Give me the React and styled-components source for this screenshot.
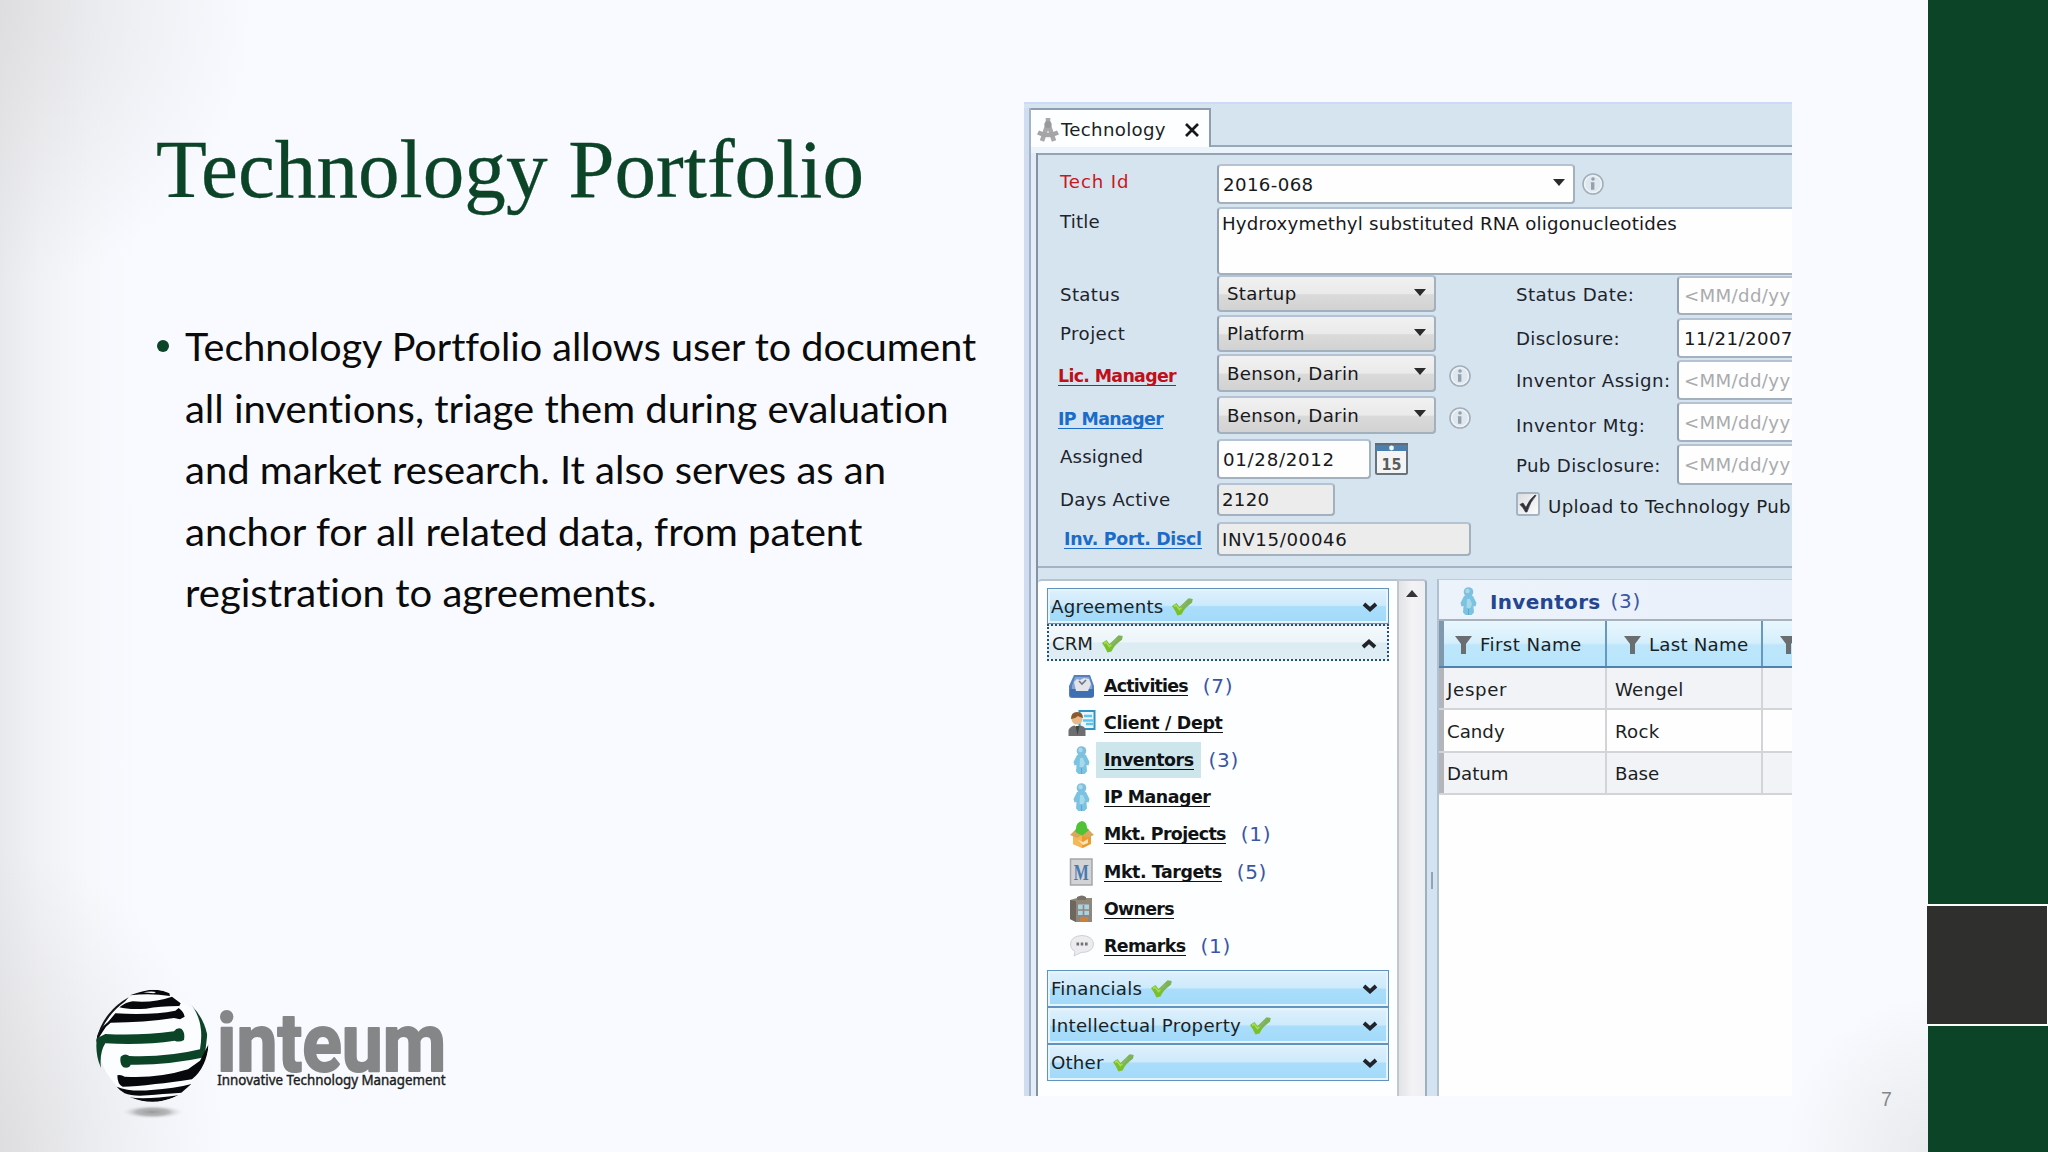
import React, { useLayoutEffect, useRef, useState } from 'react';
import styled, { createGlobalStyle, css } from 'styled-components';

const Global = createGlobalStyle`
  * { box-sizing: border-box; }
  html, body { margin: 0; padding: 0; overflow: hidden; }
  body { font-family: 'DejaVu Sans', Verdana, sans-serif; }
`;

/* ---------- text that is tracked or condensed to a set measure ---------- */
const FitSpan = styled.span`
  display: inline-block;
  white-space: nowrap;
  transform-origin: 0 50%;
`;

function Fit({ w, condense, children }) {
  const ref = useRef(null);
  const [style, setStyle] = useState({});
  useLayoutEffect(() => {
    const natural = ref.current.offsetWidth;
    const count = String(children).length;
    setStyle(
      condense
        ? { transform: `scaleX(${w / natural})` }
        : { letterSpacing: `${(w - natural) / count}px` }
    );
  }, []);
  return <FitSpan ref={ref} style={style}>{children}</FitSpan>;
}

/* ---------- slide ---------- */
const Slide = styled.div`
  width: 2048px;
  height: 1152px;
  display: flex;
  overflow: hidden;
  background:
    radial-gradient(ellipse 220px 240px at 1928px 1152px, rgba(228, 229, 230, 0.75), rgba(248, 250, 255, 0) 65%),
    radial-gradient(ellipse 340px 380px at 0 0, rgba(214, 214, 215, 0.6), rgba(248, 250, 255, 0) 75%),
    radial-gradient(ellipse 300px 400px at 0 1152px, rgba(214, 214, 215, 0.6), rgba(248, 250, 255, 0) 75%),
    linear-gradient(90deg, #e8e9ec 0, #f1f2f5 40px, #f6f8fc 90px, #f8faff 140px);
`;
const TextColumn = styled.section`
  width: 1024px;
  display: flex;
  flex-direction: column;
`;
const Heading = styled.h1`
  margin: 120px 0 0 156px;
  height: 110px;
  font: 400 82px/100px 'Liberation Serif', serif;
  color: #0c4428;
  -webkit-text-stroke: 0.3px #0c4428;
`;
const Bullet = styled.div`
  display: flex;
  margin: 86px 0 0 157px;
  color: #0b0b0b;
  font: 400 38px/61.6px Lato, sans-serif;
  font-variant-ligatures: none;
`;
const Dot = styled.i`
  width: 12px;
  height: 12px;
  margin: 24px 16px 0 0;
  border-radius: 50%;
  background: #0c4428;
`;
const Line = styled.div`
  height: 61.6px;
`;
const LogoWrap = styled.div`
  margin: auto 0 22px 80px;
  height: 160px;
`;
const ShotColumn = styled.section`
  width: 768px;
  padding-top: 102px;
`;
const NumberColumn = styled.div`
  width: 136px;
  padding: 1088px 0 0 89px;
  font: 400 19.5px/22px 'Liberation Sans', sans-serif;
  color: #85868b;
`;
const Rail = styled.aside`
  width: 120px;
  display: flex;
  flex-direction: column;
  background: #fbfffb;
`;
const Green = styled.div`
  background: #0c4428;
  height: ${(p) => p.$h}px;
`;
const Dark = styled.div`
  height: 118px;
  margin: 2px 1px 2px -1px;
  background: #2f302d;
`;

/* ---------- application window ---------- */
const Win = styled.div`
  width: 768px;
  height: 994px;
  display: flex;
  overflow: hidden;
  background: #d6e4f0;
  border-top: 2px solid #cbdaf6;
  font-size: 18.2px;
  color: #1b1f24;
`;
const OuterEdge = styled.div`
  width: 7px;
  background: #d0ddf0;
  border-right: 2px solid #a5b3c8;
  margin-top: ${(p) => p.$t || 0}px;
`;
const WinMain = styled.div`
  flex: 1;
  min-width: 0;
  display: flex;
  flex-direction: column;
`;
const TabStrip = styled.div`
  height: 43px;
  display: flex;
  align-items: flex-end;
`;
const Tab = styled.div`
  width: 180px;
  height: 39px;
  display: flex;
  align-items: center;
  padding: 3px 0 0 6px;
  background: #fcfeff;
  border: solid #8f9db0;
  border-width: 2px 2px 0 0;
`;
const TabText = styled.span`
  margin: 0 17px 0 2px;
  width: 106px;
  line-height: 24px;
`;
const TabRest = styled.div`
  flex: 1;
  height: 43px;
  border-bottom: 2px solid #98a8ba;
`;
const TabGap = styled.div`
  height: 6px;
  background: #ebf4fa;
`;
const Body = styled.div`
  flex: 1;
  display: flex;
  min-height: 0;
`;
const PaleEdge = styled.div`
  width: 7px;
  background: #e3edf7;
  border-right: 2px solid #8592a3;
`;
const Content = styled.div`
  flex: 1;
  min-width: 0;
  display: flex;
  flex-direction: column;
  border-top: 2px solid #95a3b3;
`;

/* ---------- form ---------- */
const FormPart = styled.div`
  display: flex;
  height: ${(p) => p.$h}px;
`;
const Col = styled.div`
  width: ${(p) => p.$w}px;
  flex: none;
  display: flex;
  flex-direction: column;
  padding-left: ${(p) => p.$pad || 0}px;
`;
const labelTones = {
  plain: css`color: #1d242c;`,
  required: css`color: #c8171e;`,
  requiredLink: css`color: #c00f18; font-weight: 700; font-size: 17.4px;`,
  link: css`color: #1a6cc8; font-weight: 700; font-size: 17.4px;`,
};
const Label = styled.div`
  height: 24px;
  line-height: 24px;
  margin: ${(p) => p.$gap}px 0 0 ${(p) => p.$shift || 0}px;
  ${(p) => labelTones[p.$tone || 'plain']}
`;
const Under = styled.span`
  display: inline-block;
  height: 22px;
  line-height: 24px;
  border-bottom: 1.5px solid currentColor;
`;
const FieldRow = styled.div`
  display: flex;
  align-items: center;
  margin-top: ${(p) => p.$gap}px;
  height: ${(p) => p.$h}px;
`;
const Box = styled.div`
  width: ${(p) => p.$w}px;
  height: 100%;
  display: flex;
  align-items: ${(p) => (p.$top ? 'flex-start' : 'center')};
  justify-content: space-between;
  flex: none;
  padding: ${(p) => (p.$top ? '3px' : '1px')} 8px 0 ${(p) => p.$pad || 4}px;
  border: 2px solid #a3b0bd;
  border-top-color: #b4c3d4;
  border-left-color: #93a0b0;
  border-radius: 4px;
  line-height: 24px;
  color: ${(p) => (p.$hint ? '#a9abae' : '#17191c')};
  background: ${(p) =>
    p.$kind === 'select'
      ? 'linear-gradient(#f1f1f1 0, #eaeaea 50%, #dadada 54%, #d2d2d2 100%)'
      : p.$kind === 'locked'
      ? '#ececec'
      : '#fefefe'};
`;
const Arrow = styled.i`
  width: 0;
  height: 0;
  margin-top: -4px;
  border: 6px solid transparent;
  border-top: 7px solid #2b2b2b;
  border-bottom: 0;
`;
const UpArrow = styled.i`
  width: 0;
  height: 0;
  border: 6px solid transparent;
  border-bottom: 7px solid #33353b;
  border-top: 0;
`;
const InfoSlot = styled.span`
  margin-left: ${(p) => p.$l}px;
  height: 24px;
  margin-top: ${(p) => p.$t || 0}px;
`;
const CheckRow = styled.div`
  display: flex;
  align-items: center;
  margin-top: 16px;
  height: 24px;
  gap: 8px;
  white-space: nowrap;
  width: 290px;
`;
const CheckBox = styled.span`
  width: 24px;
  height: 24px;
  margin-top: -4px;
  border: 2px solid #a6b3c1;
  border-radius: 3px;
  background: linear-gradient(135deg, #dcdfe2, #fcfcfc);
`;
const FormEnd = styled.div`
  height: 13px;
  margin-top: -1px;
  border-top: 2px solid #a4b2c2;
`;

/* ---------- lower panes ---------- */
const Panes = styled.div`
  flex: 1;
  display: flex;
  min-height: 0;
`;
const Nav = styled.div`
  width: 359px;
  padding: 7px 0 0 9px;
  background: #fdfeff;
  border-top: 2px solid #b5c2cf;
  border-top-left-radius: 4px;
`;
const Scroll = styled.div`
  width: 30px;
  display: flex;
  justify-content: center;
  align-items: flex-start;
  padding-top: 9px;
  background: linear-gradient(90deg, #e2e3e6, #f3f3f6 50%, #eeeff2);
  border: solid #c2c7cd;
  border-width: 2px 2px 0 2px;
  border-right-color: #9fb0bd;
  border-top-right-radius: 4px;
`;
const Splitter = styled.div`
  width: 10px;
  display: flex;
  align-items: flex-start;
  justify-content: center;
  padding-top: 293px;
  background: #d3e3f2;
`;
const Grip = styled.i`
  width: 2px;
  height: 17px;
  background: #94a3b4;
`;
const Header = styled.div`
  width: 342px;
  height: ${(p) => p.$h || 37}px;
  display: flex;
  align-items: center;
  padding: 2px 10px 0 3px;
  border: 1.5px solid #5f93c0;
  box-shadow: inset 0 0 0 2px #e6f4fd;
  background: linear-gradient(#dff0fc 0, #cdeafb 48%, #a9ddfb 52%, #a3daf9 100%);
  ${(p) =>
    p.$open &&
    css`
      border: 2px dotted #24507c;
      box-shadow: none;
      background: linear-gradient(#f3f9fc 0, #edf5fa 48%, #dcecf3 52%, #dfeef4 100%);
    `}
`;
const HeaderText = styled.span`
  line-height: 24px;
  margin-right: 8px;
`;
const Push = styled.span`
  margin-left: auto;
  height: 12px;
  line-height: 0;
`;
const Tree = styled.div`
  padding: 6px 0 5px 21px;
`;
const TreeRow = styled.div`
  height: 37.2px;
  display: flex;
  align-items: center;
`;
const TreeIcon = styled.span`
  width: 28px;
  height: 28px;
  line-height: 0;
`;
const TreeName = styled.span`
  height: 36px;
  padding: 6px 7px 0 8px;
  font-weight: 700;
  font-size: 17.4px;
  color: #101214;
  background: ${(p) => (p.$on ? '#cde6ec' : 'transparent')};
`;
const Count = styled.span`
  margin-left: ${(p) => p.$l ?? 8}px;
  color: #3a56a2;
  font-size: 20px;
  line-height: 24px;
`;

const Grid = styled.div`
  flex: 1;
  min-width: 0;
  background: #fefeff;
  border-left: 2px solid #b2bfce;
  border-top: 1px solid #bccbe6;
  overflow: hidden;
`;
const GridTitle = styled.div`
  height: 41px;
  display: flex;
  align-items: center;
  padding: 3px 0 0 16px;
  background: linear-gradient(90deg, #edf3fb, #e9f0fa);
  border-bottom: 2px solid #a8b2bd;
  color: #23468f;
  font-size: 20px;
  font-weight: 700;
`;
const GridName = styled.span`
  margin: 1px 0 0 7px;
  line-height: 24px;
`;
const Row = styled.div`
  display: flex;
  height: ${(p) => p.$h}px;
  background: ${(p) => (p.$head ? 'linear-gradient(#e9f7fe 0, #d5effc 48%, #bde6fb 54%, #b9e5fb 100%)' : p.$alt ? '#f2f3f7' : '#fefefe')};
  border-bottom: 2px solid ${(p) => (p.$head ? '#4f83ad' : '#d3d4d8')};
`;
const Handle = styled.div`
  width: 5px;
  background: ${(p) => (p.$head ? '#7f98ac' : '#b4b4bb')};
  flex: none;
`;
const Cell = styled.div`
  width: ${(p) => p.$w}px;
  flex: none;
  display: flex;
  align-items: center;
  padding: 3px 0 0 ${(p) => p.$pad}px;
  gap: 8px;
  line-height: 24px;
  border-right: 2px solid ${(p) => (p.$head ? '#6699c2' : '#d3d4d8')};
`;
const LightCount = styled.span`
  font-weight: 400;
`;

/* ---------- drawings ---------- */
const Info = () => (
  <svg width="24" height="24" viewBox="0 0 24 24">
    <circle cx="12" cy="12" r="10" fill="#dfe8ef" stroke="#a2afba" strokeWidth="1.6" />
    <circle cx="12" cy="12" r="8.4" fill="none" stroke="#eef4f8" strokeWidth="1.4" />
    <circle cx="12" cy="7" r="1.8" fill="#93a1ad" />
    <path d="M9.6 10.2h3.8v7.6h-3.4v-6z" fill="#93a1ad" />
  </svg>
);
const Compass = () => (
  <svg width="22" height="26" viewBox="0 0 22 26">
    <path d="M11 1v5M11 6L5 24M11 6l6 18" stroke="#a8a8a8" strokeWidth="4.6" fill="none" />
    <path d="M1 15.5q10 5 20 0" stroke="#a4a4a4" strokeWidth="4.4" fill="none" />
    <circle cx="11" cy="7.5" r="3.6" fill="#999" />
  </svg>
);
const Close = () => (
  <svg width="16" height="14" viewBox="0 0 16 14">
    <path d="M2 1l12 12M14 1L2 13" stroke="#16181b" strokeWidth="2.7" />
  </svg>
);
const CalBox = styled.span`
  margin-left: 4px;
  width: 33px;
  height: 32px;
  line-height: 0;
`;
const Calendar = () => (
  <CalBox>
    <svg width="33" height="32" viewBox="0 0 33 32">
      <rect x="1" y="1" width="31" height="30" rx="1.5" fill="#f4f4f4" stroke="#66727d" strokeWidth="2" />
      <rect x="1" y="1" width="31" height="7" fill="#4a7fb0" />
      <path d="M0 1h33" stroke="#5f6b78" strokeWidth="2" />
      <circle cx="16.5" cy="5" r="2.4" fill="#f5fafc" />
      <text x="16.5" y="26.500" textAnchor="middle" fontFamily="DejaVu Sans, sans-serif" fontWeight="700" fontSize="16" textLength="20" lengthAdjust="spacingAndGlyphs" fill="#5c5c5c">15</text>
    </svg>
  </CalBox>
);
const Tick = () => (
  <svg width="20" height="20" viewBox="0 0 20 20">
    <path d="M2 10.500l3-1.500 3 4.500Q11 6 17 1l1 .5Q12 8 9 18H7.500Q5 13 2 10.500z" fill="#2f3238" stroke="#2f3238" strokeWidth=".7" />
  </svg>
);
const GreenCheck = () => (
  <svg width="22" height="18" viewBox="0 0 22 18">
    <path d="M1 8l4.500-3 3 4L17.500.5l4 .5-.5 3.500Q14 9 10.500 16.500L6.500 17.500Q4 12 1 8z" fill="#79c02c" />
    <path d="M3 8.500l2-1.500 3.500 4.500L16 4" fill="none" stroke="#a6db5a" strokeWidth="1.600" />
    <path d="M9 9.500L17.500.5l4 .5-.5 3.500-7 6z" fill="#7fae66" opacity=".8" />
  </svg>
);
const Chevron = ({ up }) => (
  <svg width="16" height="12" viewBox="0 0 16 12">
    <path d={up ? 'M2 9l6-5.500L14 9' : 'M2 3l6 5.500L14 3'} fill="none" stroke="#20242a" strokeWidth="3.800" />
  </svg>
);
const Funnel = () => (
  <svg width="17" height="18" viewBox="0 0 17 18">
    <path d="M0 0h17L11 8v10H6V8z" fill="#6b6e71" />
  </svg>
);
const Person = () => (
  <svg width="28" height="28" viewBox="0 0 28 28">
    <path d="M9 9q5-2 9 0l3.500 7-1 3.500-2-.5.5 6.500-2.500 2.500h-6L8 25.500 8.500 19l-2 .5-1-3.500z" fill="#7cc3e2" />
    <path d="M12 12h3l2 5-1.500 4h-4z" fill="#a6d9ec" />
    <circle cx="13.500" cy="5" r="4.800" fill="#7fc0df" />
    <circle cx="12.500" cy="4" r="2.200" fill="#abd9eb" />
    <path d="M13.500 22v6" stroke="#5ba8cc" strokeWidth="1" />
  </svg>
);
const icons = {
  activities: (
    <svg width="28" height="28" viewBox="0 0 28 28">
      <path d="M6 3h16l4 11v9q0 3-3 3H4q-3 0-3-3v-9z" fill="#557fbd" />
      <path d="M7 5h14l3 9v3H4v-3z" fill="#86a5d3" />
      <path d="M2 17h24v6q0 2-2 2H4q-2 0-2-2z" fill="#3f6fb3" />
      <path d="M6 10l3-3 3 1 4-2 5 1 2 5-3 7H8z" fill="#e2e4ea" />
      <path d="M11 9l3 3 4-4" stroke="#6c7487" strokeWidth="1.600" fill="none" />
    </svg>
  ),
  client: (
    <svg width="28" height="28" viewBox="0 0 28 28">
      <rect x="11.500" y="2" width="15" height="18" fill="#e9f6fd" stroke="#2e94c4" strokeWidth="2" />
      <path d="M16 7h8M15 11.500h10M18 15h7" stroke="#5cc6ee" strokeWidth="2.400" />
      <circle cx="9" cy="10" r="5.500" fill="#e9b98a" />
      <path d="M3 10q0-7 6-7 6 0 6 6-4-1-5-2-3 3-7 3z" fill="#8c5a2b" />
      <path d="M.5 27v-6q2-4 6-4.500l3 3 3-3q5 1 5 4.500v6z" fill="#6e6e70" />
      <path d="M7.500 17l2 9 2-9z" fill="#3a4a43" />
    </svg>
  ),
  person: <Person />,
  projects: (
    <svg width="28" height="28" viewBox="0 0 28 28">
      <path d="M5 13h18v11l-8 4-10-4z" fill="#ee9b2e" />
      <path d="M5 13l9 3v12L5 24z" fill="#f6b758" />
      <path d="M2 15l6-6 6 6-5 3zM26 15l-6-6-6 6 5 3z" fill="#d9a75e" />
      <path d="M8 9q0-7 6-8 5 1 5 7l2 2-6 5q-5 0-8-4z" fill="#4fc235" />
      <path d="M10 20l5 2 5-3v4l-5 2z" fill="#fbe3bd" />
    </svg>
  ),
  targets: (
    <svg width="28" height="28" viewBox="0 0 28 28">
      <rect x="2.500" y="1" width="21.500" height="26" fill="#d1d3d5" stroke="#a2a6aa" strokeWidth="1.500" />
      <text x="13.300" y="21.500" textAnchor="middle" fontFamily="Liberation Serif, serif" fontWeight="700" fontSize="24" textLength="15" lengthAdjust="spacingAndGlyphs" fill="#4a78b0">M</text>
    </svg>
  ),
  owners: (
    <svg width="28" height="28" viewBox="0 0 28 28">
      <path d="M2 5l7-2h15v24H8l-6-3z" fill="#8f877b" />
      <path d="M2 5l6 1v21l-6-3z" fill="#6d675e" />
      <path d="M9 2q5-3 9 0v3H9z" fill="#777169" />
      <rect x="10" y="9.500" width="11" height="10.500" fill="#a9d3e4" />
      <path d="M15.500 10v10M9.500 15h12" stroke="#8f877b" strokeWidth="1.600" />
      <path d="M12 22h8v4.500h-8z" fill="#c9813f" />
    </svg>
  ),
  remarks: (
    <svg width="28" height="28" viewBox="0 0 28 28">
      <path d="M14 3.500q11 .5 11.500 8.500Q25 20.500 13 20.500L6 24l1-4.500Q2.500 17 2.500 12 3 4 14 3.500z" fill="#ececef" stroke="#cfd0d3" />
      <path d="M8.500 12h2.600M12.700 12h2.600M17 12h2.600" stroke="#6e7177" strokeWidth="2.800" />
    </svg>
  ),
};

const Logo = () => (
  <svg width="380" height="160" viewBox="0 0 1140 480">
    <defs>
      <clipPath id="globe"><circle cx="217" cy="227" r="168" /></clipPath>
      <radialGradient id="shade"><stop offset="0" stopColor="#9a9b9d" /><stop offset=".5" stopColor="#b8b9bb" /><stop offset="1" stopColor="#f6f8fc" stopOpacity="0" /></radialGradient>
    </defs>
    <ellipse cx="217" cy="426" rx="98" ry="22" fill="url(#shade)" />
    <circle cx="217" cy="227" r="160" fill="#fcfdff" />
    <g clipPath="url(#globe)">
      <path d="M150 76q60-24 98-14l20 8 2 8q-60-10-120-2z" fill="#07080b" />
      <path d="M190 67q24-5 38-1l-6 4q-20-2-32-3z" fill="#fcfdff" />
      <path d="M118 112q20-16 40-18 60 6 118-14l26 20-4 8q-60 0-100 8-50 4-80-4z" fill="#07080b" />
      <path d="M84 156l22-26q110 6 180-8l10-8q16 12 18 26l-14 8-18-4q-90 14-190 14l-14 12q-20 30-32 50 4-38 38-64z" fill="#07080b" />
      <path d="M46 222q10-54 40-90 24-30 60-50l-10 12q-50 36-74 90z" fill="#15161a" />
      <path d="M48 206l28-14q100 6 206-8 8-12 22-8 12 10 8 34-14 8-28 2-90 14-208 8-20 30-12 86-22-32-16-100z" fill="#0c4428" />
      <path d="M324 92q50 40 58 100l-8 70q-110 24-222 22-4 12-22 8-12-10-8-32 14-12 26-2 116 4 212-20 16-90-36-146z" fill="#0c4428" />
      <path d="M112 316q10-4 22 4 100 6 190-22l36-26 26-50q-6 70-50 106-60 10-110 14-60 8-98 8-16-6-16-34z" fill="#07080b" />
      <path d="M110 350q40 16 104 10 70-4 120-18l-30 26q-60 4-100 8-46 4-70-6-16-10-24-20z" fill="#07080b" />
      <path d="M146 382q50 8 150-6-40 20-82 22-40-4-68-16z" fill="#07080b" />
    </g>
    <text x="411" y="302" fontFamily="Roboto, sans-serif" fontWeight="700" fontSize="246" textLength="688" lengthAdjust="spacingAndGlyphs" fill="#858688" stroke="#858688" strokeWidth="6" strokeLinejoin="round">inteum</text>
    <text x="412" y="345" fontFamily="Noto Sans, sans-serif" fontWeight="400" fontSize="41" textLength="685" lengthAdjust="spacingAndGlyphs" fill="#1c1d20" stroke="#1c1d20" strokeWidth="1.2">Innovative Technology Management</text>
  </svg>
);

/* ---------- data ---------- */
const bodyLines = [
  ['Technology Portfolio allows user to document', 791],
  ['all inventions, triage them during evaluation', 764],
  ['and market research. It also serves as an', 701],
  ['anchor for all related data, from patent', 677],
  ['registration to agreements.', 471],
];
const leftLabels = [
  { t: 'Status', w: 60, gap: 8 },
  { t: 'Project', w: 65, gap: 15 },
  { t: 'Lic. Manager', w: 118, gap: 18, tone: 'requiredLink', shift: -2 },
  { t: 'IP Manager', w: 105, gap: 19, tone: 'link', shift: -2 },
  { t: 'Assigned', w: 83, gap: 14 },
  { t: 'Days Active', w: 110, gap: 19 },
  { t: 'Inv. Port. Discl', w: 138, gap: 15, tone: 'link', shift: 4 },
];
const rightLabels = [
  { t: 'Status Date:', w: 118, gap: 8 },
  { t: 'Disclosure:', w: 104, gap: 20 },
  { t: 'Inventor Assign:', w: 155, gap: 18 },
  { t: 'Inventor Mtg:', w: 129, gap: 21 },
  { t: 'Pub Disclosure:', w: 145, gap: 16 },
];
const dates = [
  { t: '<MM/dd/yy', gap: 1, h: 39, hint: true },
  { t: '11/21/2007', gap: 3, h: 40 },
  { t: '<MM/dd/yy', gap: 2, h: 40, hint: true },
  { t: '<MM/dd/yy', gap: 2, h: 40, hint: true },
  { t: '<MM/dd/yy', gap: 2, h: 41, hint: true },
];
const tree = [
  { icon: 'activities', t: 'Activities', w: 84, n: 7 },
  { icon: 'client', t: 'Client / Dept', w: 119 },
  { icon: 'person', t: 'Inventors', w: 90, n: 3, on: true },
  { icon: 'person', t: 'IP Manager', w: 106 },
  { icon: 'projects', t: 'Mkt. Projects', w: 122, n: 1 },
  { icon: 'targets', t: 'Mkt. Targets', w: 118, n: 5 },
  { icon: 'owners', t: 'Owners', w: 70 },
  { icon: 'remarks', t: 'Remarks', w: 82, n: 1 },
];
const people = [
  ['Jesper', 60, 'Wengel', 68],
  ['Candy', 58, 'Rock', 44],
  ['Datum', 62, 'Base', 44],
];

function Labels({ items }) {
  return items.map((l) => (
    <Label key={l.t} $gap={l.gap} $tone={l.tone} $shift={l.shift}>
      {l.tone ? <Under><Fit w={l.w}>{l.t}</Fit></Under> : <Fit w={l.w}>{l.t}</Fit>}
    </Label>
  ));
}

function Select({ text, w, gap, h, info }) {
  return (
    <FieldRow $gap={gap} $h={h}>
      <Box $w={219} $pad={8} $kind="select"><Fit w={w}>{text}</Fit><Arrow /></Box>
      {info && <InfoSlot $l={12} $t={5}><Info /></InfoSlot>}
    </FieldRow>
  );
}

function Section({ text, w, open, h }) {
  return (
    <Header $open={open} $h={h}>
      <HeaderText><Fit w={w}>{text}</Fit></HeaderText>
      <GreenCheck />
      <Push><Chevron up={open} /></Push>
    </Header>
  );
}

function TechForm() {
  return (
    <>
      <FormPart $h={120}>
        <Col $w={179} $pad={22}>
          <Label $gap={15} $tone="required"><Fit w={69}>Tech Id</Fit></Label>
          <Label $gap={16}><Fit w={40}>Title</Fit></Label>
        </Col>
        <Col $w={590}>
          <FieldRow $gap={9} $h={40}>
            <Box $w={358}><Fit w={91}>2016-068</Fit><Arrow /></Box>
            <InfoSlot $l={6}><Info /></InfoSlot>
          </FieldRow>
          <FieldRow $gap={3} $h={68}>
            <Box $w={590} $top $pad={3}><Fit w={455}>Hydroxymethyl substituted RNA oligonucleotides</Fit></Box>
          </FieldRow>
        </Col>
      </FormPart>
      <FormPart $h={292}>
        <Col $w={179} $pad={22}><Labels items={leftLabels} /></Col>
        <Col $w={299}>
          <Select text="Startup" w={70} gap={0} h={37} />
          <Select text="Platform" w={78} gap={3} h={37} />
          <Select text="Benson, Darin" w={132} gap={2} h={38} info />
          <Select text="Benson, Darin" w={132} gap={4} h={38} info />
          <FieldRow $gap={5} $h={40}>
            <Box $w={154}><Fit w={112}>01/28/2012</Fit></Box>
            <Calendar />
          </FieldRow>
          <FieldRow $gap={4} $h={33}><Box $w={118} $pad={3} $kind="locked"><Fit w={47}>2120</Fit></Box></FieldRow>
          <FieldRow $gap={6} $h={34}><Box $w={254} $pad={3} $kind="locked"><Fit w={126}>INV15/00046</Fit></Box></FieldRow>
        </Col>
        <Col $w={161}>
          <Labels items={rightLabels} />
          <CheckRow><CheckBox><Tick /></CheckBox><Fit w={243}>Upload to Technology Pub</Fit></CheckRow>
        </Col>
        <Col $w={130}>
          {dates.map((d, i) => (
            <FieldRow key={i} $gap={d.gap} $h={d.h}>
              <Box $w={140} $hint={d.hint} $pad={5}><Fit w={d.hint ? 107 : 109}>{d.t}</Fit></Box>
            </FieldRow>
          ))}
        </Col>
      </FormPart>
      <FormEnd />
    </>
  );
}

function NavPane() {
  return (
    <Nav>
      <Section text="Agreements" w={112} h={36} />
      <Section text="CRM" w={41} open h={37} />
      <Tree>
        {tree.map((r) => (
          <TreeRow key={r.t}>
            <TreeIcon>{icons[r.icon]}</TreeIcon>
            <TreeName $on={r.on}><Under><Fit w={r.w}>{r.t}</Fit></Under></TreeName>
            {r.n && <Count><Fit w={30}>{`(${r.n})`}</Fit></Count>}
          </TreeRow>
        ))}
      </Tree>
      <Section text="Financials" w={91} />
      <Section text="Intellectual Property" w={190} />
      <Section text="Other" w={53} />
    </Nav>
  );
}

function InventorGrid() {
  return (
    <Grid>
      <GridTitle>
        <Person />
        <GridName><Fit w={111}>Inventors</Fit></GridName>
        <Count $l={10}><LightCount><Fit w={30}>(3)</Fit></LightCount></Count>
      </GridTitle>
      <Row $h={47} $head>
        <Handle $head />
        <Cell $w={163} $pad={11} $head><Funnel /><Fit w={102}>First Name</Fit></Cell>
        <Cell $w={156} $pad={17} $head><Funnel /><Fit w={99}>Last Name</Fit></Cell>
        <Cell $w={60} $pad={17} $head><Funnel /></Cell>
      </Row>
      {people.map(([a, aw, b, bw], i) => (
        <Row key={a} $h={42.3} $alt={i % 2 === 0}>
          <Handle />
          <Cell $w={163} $pad={3}><Fit w={aw}>{a}</Fit></Cell>
          <Cell $w={156} $pad={8}><Fit w={bw}>{b}</Fit></Cell>
        </Row>
      ))}
    </Grid>
  );
}

export default function App() {
  return (
    <>
      <Global />
      <Slide>
        <TextColumn>
          <Heading><Fit w={708} condense>Technology Portfolio</Fit></Heading>
          <Bullet>
            <Dot />
            <div>
              {bodyLines.map(([t, w]) => <Line key={t}><Fit w={w} condense>{t}</Fit></Line>)}
            </div>
          </Bullet>
          <LogoWrap><Logo /></LogoWrap>
        </TextColumn>
        <ShotColumn>
          <Win>
            <OuterEdge $t={4} />
            <WinMain>
              <TabStrip>
                <Tab><Compass /><TabText><Fit w={105}>Technology</Fit></TabText><Close /></Tab>
                <TabRest />
              </TabStrip>
              <TabGap />
              <Body>
                <PaleEdge />
                <Content>
                  <TechForm />
                  <Panes>
                    <NavPane />
                    <Scroll><UpArrow /></Scroll>
                    <Splitter><Grip /></Splitter>
                    <InventorGrid />
                  </Panes>
                </Content>
              </Body>
            </WinMain>
          </Win>
        </ShotColumn>
        <NumberColumn>7</NumberColumn>
        <Rail>
          <Green $h={904} />
          <Dark />
          <Green $h={126} />
        </Rail>
      </Slide>
    </>
  );
}
